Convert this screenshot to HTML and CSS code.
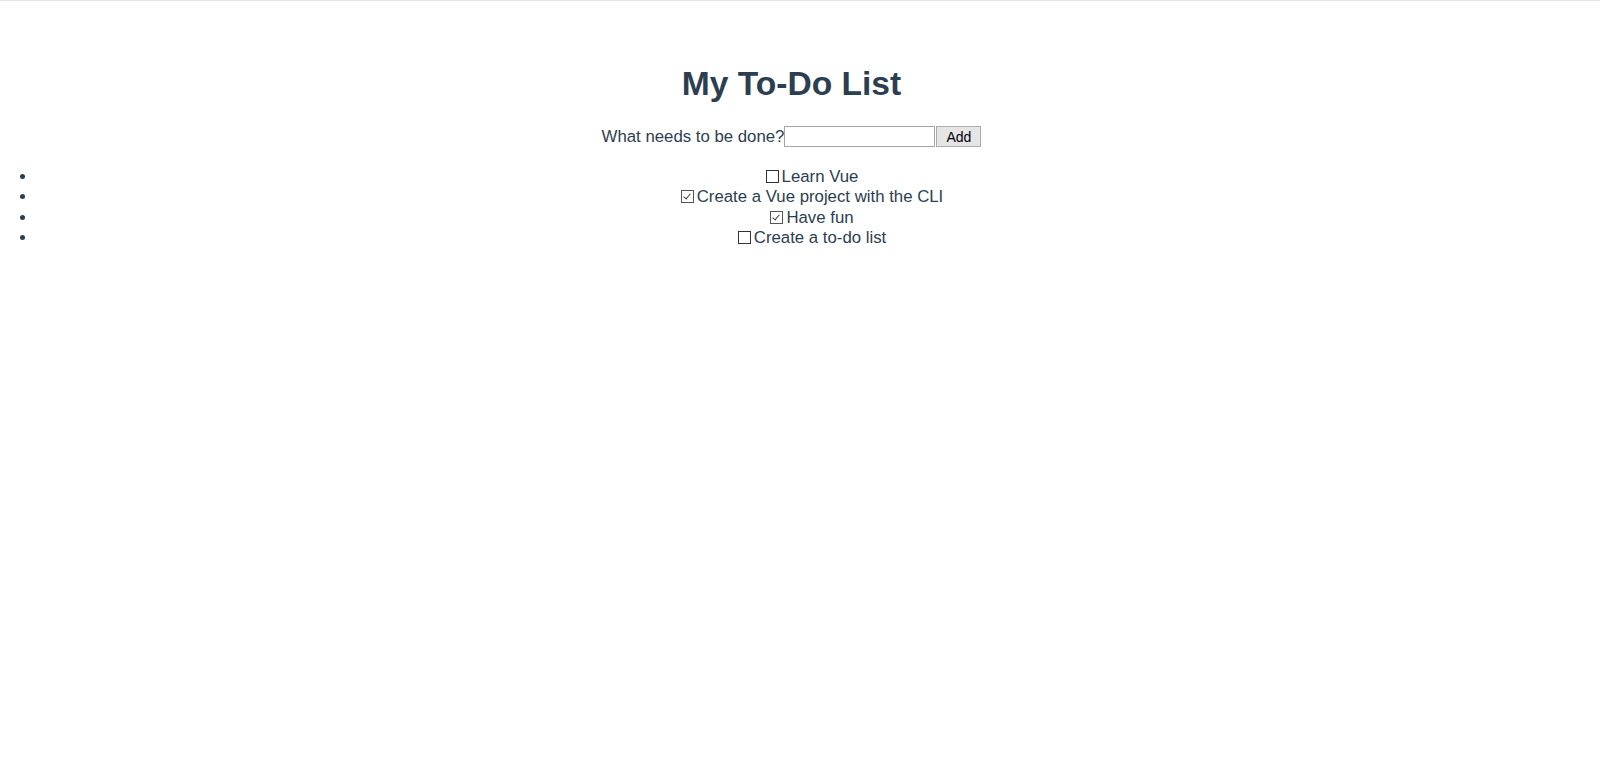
FILE: index.html
```html
<!DOCTYPE html>
<html lang="en">
<head>
<meta charset="utf-8">
<title>To-Do List</title>
<link rel="stylesheet" href="styles.css">
</head>
<body>
<div class="topline"></div>
<div id="app">
  <h1 class="title">My To-Do List</h1>
  <form class="add-form">
    <label class="add-label" for="new-todo-input">What needs to be done?</label><input type="text" id="new-todo-input" class="add-input" autocomplete="off"><button type="submit" class="add-btn">Add</button>
  </form>
  <ul class="todo-list">
    <li class="todo-item"><input type="checkbox" class="todo-check" id="t1"><label for="t1">Learn Vue</label></li>
    <li class="todo-item"><input type="checkbox" class="todo-check" id="t2" checked><label for="t2">Create a Vue project with the CLI</label></li>
    <li class="todo-item"><input type="checkbox" class="todo-check" id="t3" checked><label for="t3">Have fun</label></li>
    <li class="todo-item"><input type="checkbox" class="todo-check" id="t4"><label for="t4">Create a to-do list</label></li>
  </ul>
</div>
</body>
</html>
```
FILE: styles.css
```css
html, body {
  margin: 0;
  padding: 0;
  background: #ffffff;
}

body {
  padding-right: 17px;
}

.topline {
  height: 1px;
  background: #e3e3e3;
  margin-right: -17px;
}

#app {
  font-family: "Liberation Sans", Arial, Helvetica, sans-serif;
  text-align: center;
  color: #2c3e50;
  padding-top: 64px;
}

.title {
  font-size: 33.6px;
  font-weight: bold;
  margin: 0 0 23px 0;
  line-height: 38px;
}

.add-form {
  margin: 0;
  font-size: 16.8px;
  line-height: 20px;
}

.add-label {
  vertical-align: middle;
}

.add-input {
  box-sizing: border-box;
  width: 151px;
  height: 21px;
  margin: 0;
  padding: 1px 2px;
  border: 1px solid #a5a5a5;
  border-radius: 0;
  font-family: "Liberation Sans", Arial, sans-serif;
  font-size: 13.33px;
  vertical-align: middle;
  outline: none;
}

.add-btn {
  box-sizing: border-box;
  width: 45px;
  height: 21px;
  margin: 0 0 0 1px;
  padding: 0 6px;
  border: 1px solid #adadad;
  border-radius: 0;
  background: #e5e5e5;
  color: #000000;
  font-family: "Liberation Sans", Arial, sans-serif;
  font-size: 14px;
  vertical-align: middle;
}

.todo-list {
  margin: 20px 0;
  padding-left: 37px;
  font-size: 16.8px;
  line-height: 20.4px;
}

.todo-item {
  list-style: disc;
}

.todo-check {
  appearance: none;
  -webkit-appearance: none;
  box-sizing: border-box;
  width: 13px;
  height: 13px;
  margin: 3px 3px 0 4px;
  border: 1px solid #333333;
  border-radius: 0;
  background: #ffffff;
  position: relative;
  vertical-align: -1px;
}

.todo-check:checked {
  border-color: #555555;
}

.todo-check:checked::after {
  content: "";
  position: absolute;
  left: 3px;
  top: 1px;
  width: 3px;
  height: 6px;
  border-right: 1.5px solid #444444;
  border-bottom: 1.5px solid #444444;
  transform: rotate(40deg);
}
```
